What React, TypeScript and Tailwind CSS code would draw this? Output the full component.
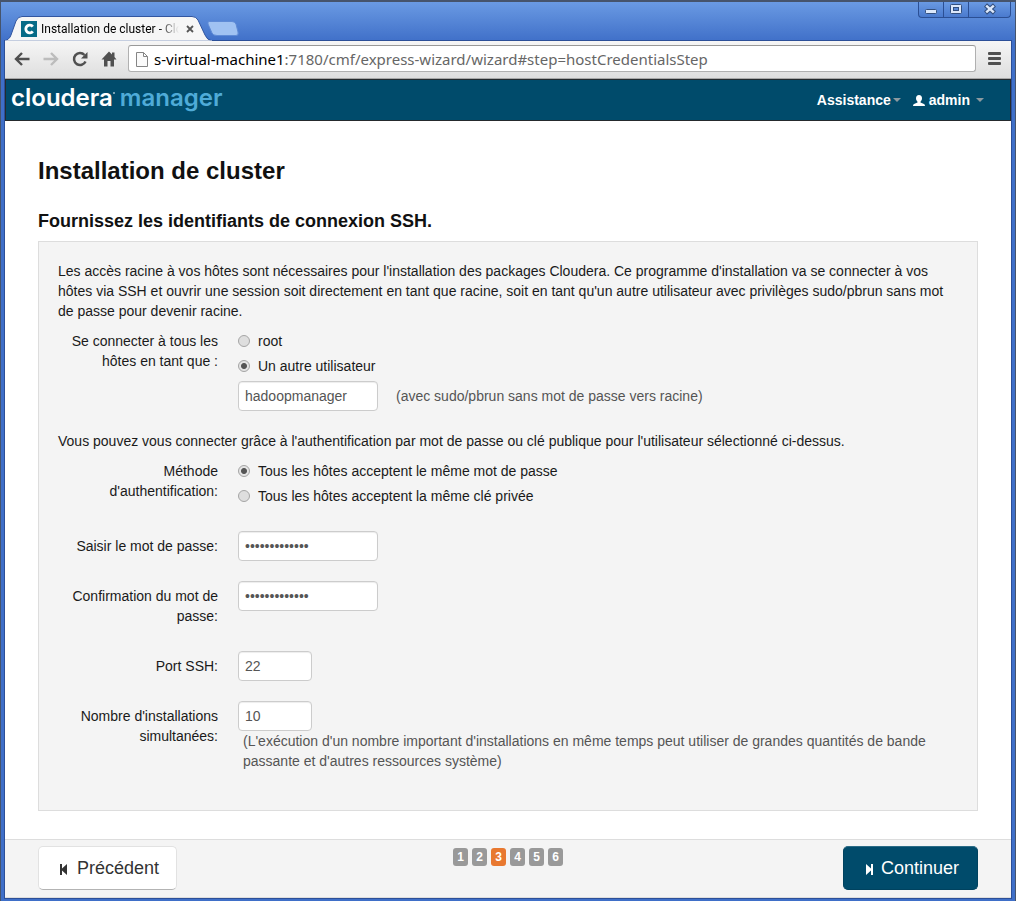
import React from "react";

function TabShape() {
  return (
    <svg className="absolute left-0 top-0 h-[25px] w-[241px]" viewBox="0 0 241 25" aria-hidden="true">
      <path d="M-1 25 C3 24 5 22 6 19 L11 5 Q13 0.5 17 0.5 H187 Q191 0.5 193 4 L200 19 Q202 24 207 25 Z" fill="#f6f6f6" stroke="#3256a0" strokeWidth="1" />
      <path d="M-1 24.500H207V25H-1Z" fill="#f6f6f6" />
      <path d="M204 5.500 H227 Q230 5.500 231 8 L233 16 Q234 19.500 231 19.500 H212 Q208 19.500 207 17 L203 8 Q202.500 5.500 204 5.500 Z" fill="#a0c2f2" stroke="#5f8bd6" />
    </svg>
  );
}

function TitleBar() {
  return (
    <div className="relative z-10 flex h-[39px] justify-between">
      <div className="relative mt-[14px] flex h-[25px] w-[241px] pl-[16px]">
        <TabShape />
        <div className="relative flex w-[176px] items-center text-[12px]">
          <svg className="mr-1 size-4 shrink-0" viewBox="0 0 16 16" aria-hidden="true">
            <rect width="16" height="16" fill="#066b87" />
            <path d="M11.800 10.400 A3.900 3.900 0 1 1 11.800 5.600" fill="none" stroke="#fff" strokeWidth="2.800" />
          </svg>
          <span className="w-[138px] whitespace-nowrap bg-linear-to-r from-black from-85% to-transparent bg-clip-text font-['Roboto',sans-serif] text-transparent">
            Installation de cluster - Clo
          </span>
          <button type="button" aria-label="Fermer l'onglet" className="ml-[7px]">
            <svg className="size-[8px]" viewBox="0 0 8 8" stroke="#555" strokeWidth="1.800">
              <path d="M1 1 7 7M7 1 1 7" />
            </svg>
          </button>
        </div>
      </div>
      <div className="flex h-4 overflow-hidden rounded-b-[4px] border border-t-0 border-[#2b4f94] bg-linear-to-b from-[#6a9ae3] to-[#4a7ace]">
        <button type="button" aria-label="Réduire" className="flex w-6 items-center justify-center">
          <svg className="h-4 w-6" viewBox="0 0 24 16"><rect x="6.500" y="7.500" width="11" height="4" rx="1" fill="#dce8fb" stroke="#34507f" /></svg>
        </button>
        <button type="button" aria-label="Agrandir" className="flex w-[26px] items-center justify-center border-x border-[#2b4f94]">
          <svg className="h-4 w-6" viewBox="0 0 24 16" stroke="#34507f"><rect x="6.500" y="2.500" width="11" height="9" rx="1" fill="#dce8fb" /><rect x="9.500" y="5.500" width="5" height="3" fill="#5b89d6" /></svg>
        </button>
        <button type="button" aria-label="Fermer" className="flex w-[41px] items-center justify-center">
          <svg className="h-4 w-6" viewBox="0 0 24 16"><path d="M7.500 3 16.500 11M16.500 3 7.500 11" stroke="#34507f" strokeWidth="4.500" /><path d="M8.200 3.600 15.800 10.400M15.800 3.600 8.200 10.400" stroke="#dce8fb" strokeWidth="2.400" /></svg>
        </button>
      </div>
    </div>
  );
}

function Toolbar() {
  return (
    <div className="flex h-[38px] items-center border-b border-[#a8a8a8] bg-linear-to-b from-[#f6f6f6] to-[#dedede] pb-[2px] pl-[9px] pr-[10px] text-[#505050]">
      <button type="button" aria-label="Précédent (navigateur)">
        <svg className="size-4" viewBox="0 0 16 16" fill="none" stroke="#505050" strokeWidth="2.400"><path d="M15.500 8H2M8 2 2 8 8 14" /></svg>
      </button>
      <button type="button" aria-label="Suivant" className="ml-[13px]">
        <svg className="size-4" viewBox="0 0 16 16" fill="none" stroke="#bcbcbc" strokeWidth="2.400"><path d="M0.500 8H14M8 2 14 8 8 14" /></svg>
      </button>
      <button type="button" aria-label="Actualiser" className="ml-[13px]">
        <svg className="size-4" viewBox="0 0 16 16" fill="none"><path d="M13.500 10.500A6 6 0 1 1 12.500 4" stroke="#505050" strokeWidth="2.500" /><path d="M15.500 1V7.500H9Z" fill="#505050" /></svg>
      </button>
      <button type="button" aria-label="Accueil" className="ml-[13px]">
        <svg className="size-4" viewBox="0 0 16 16" fill="#505050"><path d="M8 0.500 11 3.500V1.500H13.500V6L15.500 8.500H13V15.500H9.500V10H6.500V15.500H3V8.500H0.500Z" /></svg>
      </button>
      <div className="ml-[11px] flex h-[27px] grow items-center rounded-[3px] border border-[#b0b0b0] border-t-[#999] bg-white pl-[7px]">
        <svg className="h-4 w-3" viewBox="0 0 12 16" fill="#fafafa" stroke="#858585"><path d="M.500 1.500H7.500L11.500 5.500V15.500H.500ZM7.500 1.500V5.500H11.500" /></svg>
        <div className="ml-[6px] font-['Noto_Sans',sans-serif] text-[15px] leading-5 text-[#666]">
          <span className="text-black">s-virtual-machine1</span>:7180/cmf/express-wizard/wizard#step=hostCredentialsStep
        </div>
      </div>
      <button type="button" aria-label="Menu" className="ml-3">
        <svg className="h-[13px] w-[13px]" viewBox="0 0 13 13" fill="#505050"><rect width="13" height="3" rx="1" /><rect y="5" width="13" height="3" rx="1" /><rect y="10" width="13" height="3" rx="1" /></svg>
      </button>
    </div>
  );
}

function Caret() {
  return <svg className="h-1 w-2" viewBox="0 0 8 4" fill="#8c9aa0" aria-hidden="true"><path d="M0 0H8L4 4Z" /></svg>;
}

function NavBar() {
  return (
    <header className="flex h-[42px] items-center justify-between border border-[#252a2d] bg-[#004b6b] pl-[5px] pr-[26px] text-white">
      <a href="#accueil" className="flex items-center gap-[5px] pb-1 font-['Inter',sans-serif] text-[24px] leading-8 font-semibold">
        <span className="flex items-start">cloudera<span className="mt-[10px] size-[2px] rounded-full bg-[#9fbdca]" /></span>
        <span className="text-[#4fabd8]">manager</span>
      </a>
      <nav className="flex items-center text-[14px] font-bold leading-5">
        <button type="button" className="flex items-center gap-[2px]">Assistance<Caret /></button>
        <button type="button" className="ml-3 flex items-center">
          <svg className="mr-1 h-[11px] w-3" viewBox="0 0 12 11" fill="#fff" aria-hidden="true"><path d="M6 0C8 0 9 1.300 9 3.300 9 5 8.200 6 7.500 6.700V7.600L11 9Q12 9.500 12 11H0Q0 9.500 1 9L4.500 7.600V6.700C3.800 6 3 5 3 3.300 3 1.300 4 0 6 0Z" /></svg>
          <span className="mr-[6px]">admin</span>
          <Caret />
        </button>
      </nav>
    </header>
  );
}

const inputClass =
  "h-[30px] rounded-[4px] border border-[#ccc] bg-white px-[6px] text-[14px] leading-5 text-[#555] shadow-[inset_0_1px_1px_rgba(0,0,0,0.075)]";

function Choice({ name, label, checked }: { name: string; label: string; checked?: boolean }) {
  return (
    <label className="flex items-center gap-2">
      <input
        type="radio"
        name={name}
        defaultChecked={checked}
        className="size-3 appearance-none rounded-full border border-[#a5a5a5] bg-[#dedede] checked:bg-[radial-gradient(circle,#555_0_2.5px,#e4e4e4_3.5px)]"
      />
      {label}
    </label>
  );
}

function Row({ label, htmlFor, children }: { label: string; htmlFor: string; children: React.ReactNode }) {
  return (
    <div className="flex items-start gap-5">
      <label htmlFor={htmlFor} className="mt-[5px] w-40 shrink-0 text-right">{label}</label>
      <div>{children}</div>
    </div>
  );
}

function ChoiceRow({ label, children }: { label: string; children: React.ReactNode }) {
  return (
    <div role="radiogroup" aria-label={label} className="flex items-start gap-5">
      <span className="w-40 shrink-0 text-right">{label}</span>
      <div className="flex flex-col gap-[5px]">{children}</div>
    </div>
  );
}

function CredentialsForm() {
  return (
    <form id="identifiants" className="mt-[10px] grow border border-[#ddd] bg-[#f4f4f4] p-[19px] pb-[39px] text-[14px] leading-5">
      <p>
        Les accès racine à vos hôtes sont nécessaires pour l'installation des packages Cloudera. Ce programme
        d'installation va se connecter à vos hôtes via SSH et ouvrir une session soit directement en tant que racine,
        soit en tant qu'un autre utilisateur avec privilèges sudo/pbrun sans mot de passe pour devenir racine.
      </p>
      <div className="mt-[10px]">
        <ChoiceRow label="Se connecter à tous les hôtes en tant que :">
          <Choice name="compte" label="root" />
          <Choice name="compte" label="Un autre utilisateur" checked />
          <div className="flex items-center gap-[18px] text-[#555]">
            <input aria-label="Nom d'utilisateur" defaultValue="hadoopmanager" className={inputClass + " w-[140px]"} />
            <span>(avec sudo/pbrun sans mot de passe vers racine)</span>
          </div>
        </ChoiceRow>
      </div>
      <p className="mt-5">
        Vous pouvez vous connecter grâce à l'authentification par mot de passe ou clé publique pour l'utilisateur
        sélectionné ci-dessus.
      </p>
      <div className="mt-[10px]">
        <ChoiceRow label="Méthode d'authentification:">
          <Choice name="methode" label="Tous les hôtes acceptent le même mot de passe" checked />
          <Choice name="methode" label="Tous les hôtes acceptent la même clé privée" />
        </ChoiceRow>
      </div>
      <div className="mt-[25px] flex flex-col gap-5">
        <Row label="Saisir le mot de passe:" htmlFor="motdepasse">
          <input id="motdepasse" type="password" defaultValue="motdepasse123" className={inputClass + " w-[140px]"} />
        </Row>
        <Row label="Confirmation du mot de passe:" htmlFor="confirmation">
          <input id="confirmation" type="password" defaultValue="motdepasse123" className={inputClass + " w-[140px]"} />
        </Row>
        <div className="mt-[5px]">
          <Row label="Port SSH:" htmlFor="port">
            <input id="port" defaultValue="22" className={inputClass + " w-[74px]"} />
          </Row>
        </div>
        <Row label="Nombre d'installations simultanées:" htmlFor="nombre">
          <input id="nombre" defaultValue="10" className={inputClass + " block w-[74px]"} />
          <p className="pl-[5px] text-[#555]">
            (L'exécution d'un nombre important d'installations en même temps peut utiliser de grandes quantités de bande
            passante et d'autres ressources système)
          </p>
        </Row>
      </div>
    </form>
  );
}

const steps = [1, 2, 3, 4, 5, 6];

function Footer() {
  return (
    <footer className="grid grid-cols-[1fr_auto_1fr] border-y border-[#ddd] bg-[#f4f4f4] px-[33px] pb-[7px] pt-[6px] text-[18px]">
      <button type="button" className="flex h-11 items-center gap-2 justify-self-start rounded-[5px] border border-[#e2e2e2] border-b-[#b3b3b3] bg-white pl-5 pr-[17px] text-[#333]">
        <svg className="mt-[2px] h-[11px] w-[10px]" viewBox="0 0 10 11" fill="#333" aria-hidden="true"><path d="M1 0H3V4.500L8 0V11L3 6.500V11H1Z" /></svg>
        Précédent
      </button>
      <ol className="mt-[2px] flex h-[18px] gap-1 text-center text-[12px] font-bold leading-[18px] text-white">
        {steps.map((step) => (
          <li key={step} className={"w-[15px] rounded-[3px] " + (step === 3 ? "bg-[#e87830]" : "bg-[#999]")}>{step}</li>
        ))}
      </ol>
      <button type="submit" form="identifiants" className="flex h-11 items-center gap-[7px] justify-self-end rounded-[5px] border border-[#00425f] border-t-[#2b6b86] bg-[#004b6b] pl-5 pr-[18px] text-white">
        <svg className="mt-[2px] h-[11px] w-[10px]" viewBox="0 0 10 11" fill="#fff" aria-hidden="true"><path d="M9 0H7V4.500L2 0V11L7 6.500V11H9Z" /></svg>
        Continuer
      </button>
    </footer>
  );
}

export default function App() {
  return (
    <div className="flex min-h-screen flex-col border border-b-0 border-t-2 border-[#46546c] bg-[#3f6fc8] bg-[linear-gradient(#6a9ae3,#3f6fc8_40px)] px-[4px] pb-[3px] font-['Liberation_Sans',Arial,sans-serif] text-[#1a1a1a]">
      <TitleBar />
      <div className="flex grow flex-col shadow-[0_0_0_1px_#2c4f98]">
        <Toolbar />
        <NavBar />
        <main className="flex grow flex-col bg-white px-[33px] pb-7 pt-[34px]">
          <h1 className="text-[24px] font-bold leading-8 text-[#111]">Installation de cluster</h1>
          <h2 className="mt-6 text-[18px] font-bold leading-5 text-[#111]">Fournissez les identifiants de connexion SSH.</h2>
          <CredentialsForm />
        </main>
        <Footer />
      </div>
    </div>
  );
}
